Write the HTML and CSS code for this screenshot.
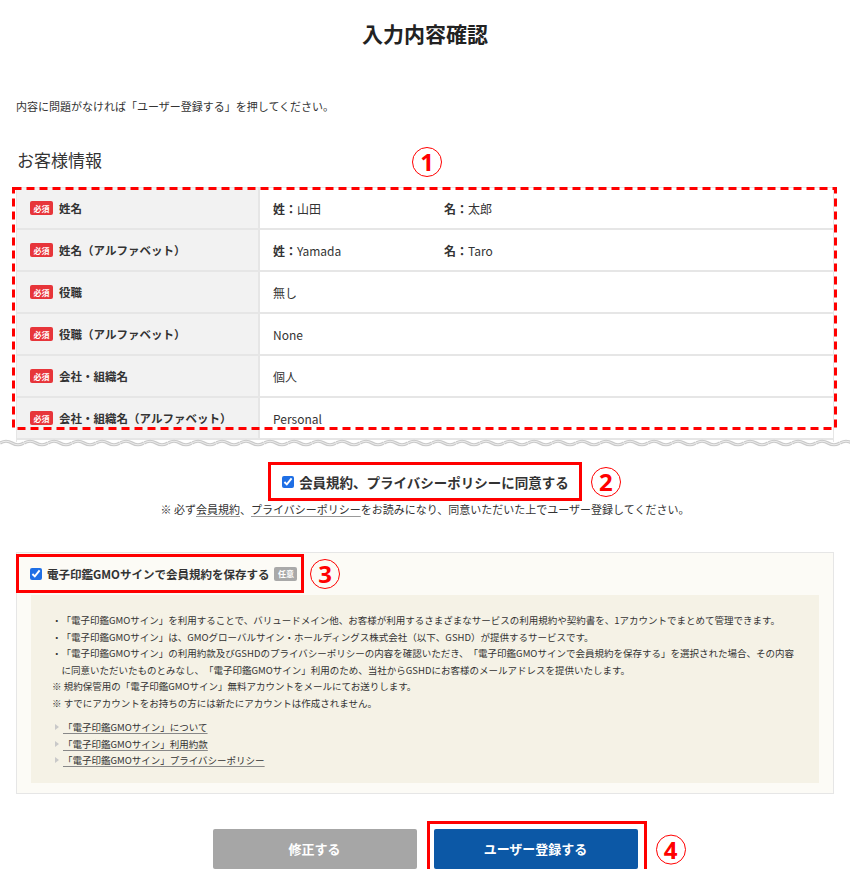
FILE: index.html
```html
<!DOCTYPE html>
<html lang="ja">
<head>
  <meta charset="UTF-8" />
  <title>入力内容確認</title>
  <link rel="stylesheet" href="styles.css">
</head>
<body>
  <div class="page">
    <h1 class="page-title">入力内容確認</h1>
    <p class="intro">内容に問題がなければ「ユーザー登録する」を押してください。</p>

    <div class="section-head">
      <h2>お客様情報</h2>
      <span class="mark mark-1">1</span>
    </div>

    <div class="info-block">
      <div class="info-table">
        <div class="row">
          <div class="label"><span class="badge">必須</span>姓名</div>
          <div class="value"><span class="half"><b>姓：</b>山田</span><span><b>名：</b>太郎</span></div>
        </div>
        <div class="row">
          <div class="label"><span class="badge">必須</span>姓名（アルファベット）</div>
          <div class="value"><span class="half"><b>姓：</b>Yamada</span><span><b>名：</b>Taro</span></div>
        </div>
        <div class="row">
          <div class="label"><span class="badge">必須</span>役職</div>
          <div class="value">無し</div>
        </div>
        <div class="row">
          <div class="label"><span class="badge">必須</span>役職（アルファベット）</div>
          <div class="value">None</div>
        </div>
        <div class="row">
          <div class="label"><span class="badge">必須</span>会社・組織名</div>
          <div class="value">個人</div>
        </div>
        <div class="row">
          <div class="label"><span class="badge">必須</span>会社・組織名（アルファベット）</div>
          <div class="value">Personal</div>
        </div>
      </div>

      <svg class="wave" width="850" height="10" viewBox="0 0 850 10">
        <defs>
          <pattern id="wavePattern" width="24" height="10" patternUnits="userSpaceOnUse">
            <path d="M0 5 Q6 1.5 12 5 T24 5 V10 H0 Z" fill="#fff" />
            <path d="M0 5 Q6 1.5 12 5 T24 5" fill="none" stroke="#c9c9c9" stroke-width="3.2" />
            <path d="M0 5 Q6 1.5 12 5 T24 5" fill="none" stroke="#ececec" stroke-width="1" />
          </pattern>
        </defs>
        <rect width="850" height="10" fill="url(#wavePattern)" />
      </svg>

      <!-- annotation box -->
      <svg class="dash-box" width="825" height="243">
        <rect x="1.5" y="1.5" width="822" height="240" fill="none" stroke="#ff0000" stroke-width="3" stroke-dasharray="8 5" />
      </svg>
    </div>

    <div class="agree">
      <label class="agree-label">
        <input type="checkbox" checked>
        会員規約、プライバシーポリシーに同意する
        <span class="mark mark-side">2</span>
      </label>
    </div>
    <p class="agree-note">※ 必ず<a href="#">会員規約</a>、<a href="#">プライバシーポリシー</a>をお読みになり、同意いただいた上でユーザー登録してください。</p>

    <div class="gmo-box">
      <div class="gmo-head">
        <label class="gmo-label">
          <input type="checkbox" checked>
          電子印鑑GMOサインで会員規約を保存する
          <span class="badge badge-gray">任意</span>
          <span class="mark mark-side mark-3">3</span>
        </label>
      </div>
      <div class="gmo-body">
        <ul class="dots">
          <li>・「電子印鑑GMOサイン」を利用することで、バリュードメイン他、お客様が利用するさまざまなサービスの利用規約や契約書を、1アカウントでまとめて管理できます。</li>
          <li>・「電子印鑑GMOサイン」は、GMOグローバルサイン・ホールディングス株式会社（以下、GSHD）が提供するサービスです。</li>
          <li>・「電子印鑑GMOサイン」の利用約款及びGSHDのプライバシーポリシーの内容を確認いただき、「電子印鑑GMOサインで会員規約を保存する」を選択された場合、その内容<br>に同意いただいたものとみなし、「電子印鑑GMOサイン」利用のため、当社からGSHDにお客様のメールアドレスを提供いたします。</li>
        </ul>
        <p class="notes">※ 規約保管用の「電子印鑑GMOサイン」無料アカウントをメールにてお送りします。<br>※ すでにアカウントをお持ちの方には新たにアカウントは作成されません。</p>
        <ul class="links">
          <li><a href="#">「電子印鑑GMOサイン」について</a></li>
          <li><a href="#">「電子印鑑GMOサイン」利用約款</a></li>
          <li><a href="#">「電子印鑑GMOサイン」プライバシーポリシー</a></li>
        </ul>
      </div>
    </div>

    <div class="buttons">
      <button type="button" class="btn btn-back">修正する</button>
      <div class="btn-wrap">
        <button type="submit" class="btn btn-submit">ユーザー登録する</button>
        <span class="mark mark-side mark-4">4</span>
      </div>
    </div>
  </div>
</body>
</html>
```

FILE: styles.css
```css
body {
  margin: 0;
  background: #fff;
  color: #333;
  font-family: "Noto Sans CJK JP", "Noto Sans", sans-serif;
  text-spacing-trim: space-all;
}

.page {
  padding: 0 16px;
}

.page-title {
  margin: 0;
  padding-top: 18px;
  font-size: 21px;
  line-height: 30px;
  font-weight: bold;
  color: #222;
  text-align: center;
}

.intro {
  margin: 50px 0 0;
  font-size: 11px;
  line-height: 16px;
}

.section-head {
  position: relative;
  margin-top: 34px;
}

.section-head h2 {
  margin: 0 0 0 1px;
  font-size: 17px;
  line-height: 24px;
  font-weight: normal;
}

/* red numbered annotation marks */
.mark {
  display: inline-flex;
  align-items: center;
  justify-content: center;
  box-sizing: border-box;
  width: 30px;
  height: 30px;
  border: 1.5px solid #ff0000;
  border-radius: 50%;
  color: #ff0000;
  font-family: "Noto Sans", sans-serif;
  font-size: 24px;
  font-weight: bold;
  line-height: 1;
  position: absolute;
}

.mark-1 {
  left: 396px;
  top: -1px;
}

.mark-side {
  left: calc(100% + 12px);
  top: 50%;
  transform: translateY(-50%);
}

.mark-3 {
  left: calc(100% + 9px);
}

.mark-4 {
  left: calc(100% + 18px);
  transform: translateY(-48%);
}

/* customer info table */
.info-block {
  position: relative;
  margin-top: 15px;
}

.info-table {
  height: 254px;
  overflow: hidden;
  border: 1px solid #e6e6e6;
  border-bottom: none;
}

.row {
  display: grid;
  grid-template-columns: 243px 1fr;
  height: 40px;
  border-bottom: 2px solid #e6e6e6;
}

.label {
  display: flex;
  align-items: center;
  gap: 6px;
  padding-left: 13px;
  background: #f2f2f2;
  border-right: 2px solid #e6e6e6;
  font-size: 11.5px;
  font-weight: bold;
}

.value {
  display: flex;
  align-items: center;
  padding-left: 13px;
  font-size: 12px;
}

.value .half {
  width: 171px;
}

.badge {
  display: inline-flex;
  align-items: center;
  justify-content: center;
  width: 23px;
  height: 14px;
  border-radius: 2px;
  background: #e7353a;
  color: #fff;
  font-size: 8px;
  font-weight: bold;
}

.badge-gray {
  background: #a9a9a9;
  margin-left: 4px;
}

.wave {
  display: block;
  margin: -4px -16px 0;
  position: relative;
}

.dash-box {
  position: absolute;
  left: -4px;
  top: 0;
}

/* agreement */
.agree {
  margin-top: 14px;
  text-align: center;
}

.agree-label {
  position: relative;
  display: inline-flex;
  align-items: center;
  gap: 5px;
  height: 33px;
  padding: 0 10px 0 11px;
  border: 3px solid #ff0000;
  font-size: 13.5px;
  font-weight: bold;
  cursor: pointer;
}

input[type="checkbox"] {
  width: 12px;
  height: 12px;
  margin: 0;
  accent-color: #1f6fe5;
}

.agree-note {
  margin: 0;
  font-size: 11px;
  line-height: 16px;
  text-align: center;
}

.agree-note a {
  color: #333;
  text-decoration: underline;
  text-decoration-color: #999;
  text-underline-offset: 2px;
}

/* GMO sign box */
.gmo-box {
  margin-top: 35px;
  background: #fcfbf6;
  border: 1px solid #e6e6e6;
  padding: 0 14px 10px;
}

.gmo-head {
  margin: 1px 0 2px -15px;
}

.gmo-label {
  position: relative;
  display: inline-flex;
  align-items: center;
  gap: 5px;
  box-sizing: border-box;
  height: 39px;
  width: 288px;
  padding-left: 11px;
  border: 3px solid #ff0000;
  font-size: 11.5px;
  font-weight: bold;
  cursor: pointer;
}

.gmo-label .badge-gray {
  margin-left: 0;
}

.gmo-body {
  background: #f5f2e6;
  padding: 17px 12px 14px 21px;
  font-size: 9.5px;
  line-height: 16.5px;
}

.dots,
.links {
  list-style: none;
  margin: 0;
  padding: 0;
}

.dots li {
  padding-left: 1em;
  text-indent: -1em;
}

.notes {
  margin: 0;
}

.links {
  margin-top: 8px;
}

.links li {
  display: flex;
  align-items: center;
  padding-left: 3px;
}

.links li::before {
  content: "";
  border-left: 4px solid #c9c9c9;
  border-top: 3px solid transparent;
  border-bottom: 3px solid transparent;
  margin-right: 4px;
}

.links a {
  color: #333;
  text-decoration: underline;
  text-decoration-color: #888;
  text-underline-offset: 2px;
}

/* buttons */
.buttons {
  display: flex;
  justify-content: center;
  gap: 17px;
  margin-top: 35px;
}

.btn-wrap {
  position: relative;
}

/* annotation frame round the submit button */
.btn-wrap::before {
  content: "";
  position: absolute;
  top: -8px;
  bottom: -8px;
  left: -7px;
  right: -9px;
  border: 3px solid #ff0000;
  pointer-events: none;
}

.btn {
  display: block;
  width: 204px;
  height: 40px;
  border: none;
  border-radius: 2px;
  color: #fff;
  font-family: "Noto Sans CJK JP", sans-serif;
  font-size: 13px;
  font-weight: bold;
  cursor: pointer;
}

.btn-back {
  background: #a6a6a6;
}

.btn-submit {
  background: #0c58a6;
}
```
